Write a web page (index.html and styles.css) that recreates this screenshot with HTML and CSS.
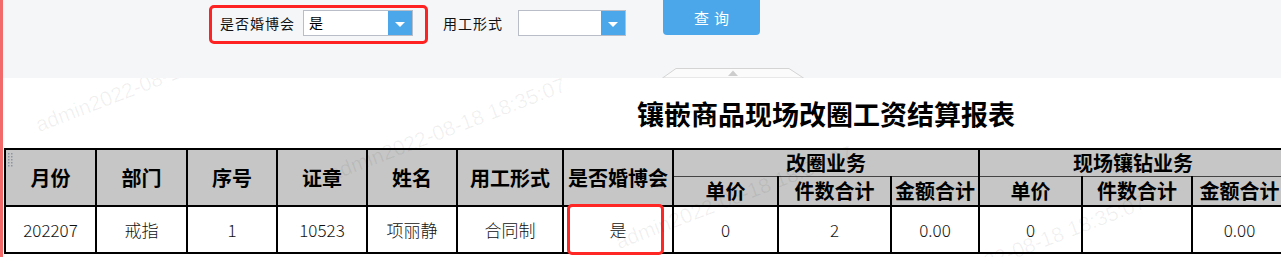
FILE: index.html
```
<!DOCTYPE html>
<html>
<head>
	<meta charset="utf-8">
	<title>镶嵌商品现场改圈工资结算报表</title>
	<link rel="stylesheet" href="styles.css">
</head>
<body>
<div class="toolbar">
	<div class="filters">
		<div class="filter filter-marked">
			<span class="filter-label">是否婚博会</span>
			<div class="combo combo-wide">
				<span class="combo-value">是</span>
				<span class="combo-arrow"></span>
			</div>
		</div>
		<div class="filter filter-plain">
			<span class="filter-label">用工形式</span>
			<div class="combo">
				<span class="combo-value"></span>
				<span class="combo-arrow"></span>
			</div>
		</div>
		<button class="query">查询</button>
	</div>
	<div class="collapse-tab">
		<svg width="142" height="10" viewBox="0 0 142 10">
			<polygon points="0.5,10 14,0.5 127,0.5 141.5,10" fill="#fbfbfc" stroke="#d4d4d4" stroke-width="1"/>
			<polygon points="66,8 71,2.5 76,8" fill="#cdcdcd"/>
		</svg>
	</div>
</div>

<div class="report">
	<h1 class="report-title">镶嵌商品现场改圈工资结算报表</h1>
	<table class="sheet">
		<colgroup>
			<col style="width:91px"><col style="width:91px"><col style="width:90px">
			<col style="width:90px"><col style="width:90px"><col style="width:106px">
			<col style="width:110px"><col style="width:105px"><col style="width:113px">
			<col style="width:88px"><col style="width:103px"><col style="width:110px">
			<col style="width:95px">
		</colgroup>
		<thead>
			<tr class="head-top">
				<th rowspan="2" class="grip-cell">
					<svg class="grip" width="5" height="14" viewBox="0 0 5 14">
						<g fill="#8c96a3">
							<rect x="0" y="0" width="1.5" height="1.5"/><rect x="3" y="0" width="1.5" height="1.5"/>
							<rect x="0" y="3" width="1.5" height="1.5"/><rect x="3" y="3" width="1.5" height="1.5"/>
							<rect x="0" y="6" width="1.5" height="1.5"/><rect x="3" y="6" width="1.5" height="1.5"/>
							<rect x="0" y="9" width="1.5" height="1.5"/><rect x="3" y="9" width="1.5" height="1.5"/>
							<rect x="0" y="12" width="1.5" height="1.5"/><rect x="3" y="12" width="1.5" height="1.5"/>
						</g>
					</svg>
					月份
				</th>
				<th rowspan="2">部门</th>
				<th rowspan="2">序号</th>
				<th rowspan="2">证章</th>
				<th rowspan="2">姓名</th>
				<th rowspan="2">用工形式</th>
				<th rowspan="2">是否婚博会</th>
				<th colspan="3" class="group">改圈业务</th>
				<th colspan="3" class="group">现场镶钻业务</th>
			</tr>
			<tr class="head-sub">
				<th>单价</th>
				<th>件数合计</th>
				<th>金额合计</th>
				<th>单价</th>
				<th>件数合计</th>
				<th>金额合计</th>
			</tr>
		</thead>
		<tbody>
			<tr class="data-row">
				<td>202207</td>
				<td>戒指</td>
				<td>1</td>
				<td>10523</td>
				<td>项丽静</td>
				<td>合同制</td>
				<td class="marked-cell"><span class="mark-box"></span>是</td>
				<td>0</td>
				<td>2</td>
				<td>0.00</td>
				<td>0</td>
				<td></td>
				<td>0.00</td>
			</tr>
		</tbody>
	</table>
</div>

<div class="watermarks">
	<span class="wm wm-1">admin2022-08-18 18:35:07</span>
	<span class="wm wm-2">admin2022-08-18 18:35:07</span>
	<span class="wm wm-3">admin2022-08-18 18:35:07</span>
	<span class="wm wm-4">admin2022-08-18 18:35:07</span>
</div>
</body>
</html>
```

FILE: styles.css
```
html{
	margin: 0;
	overflow: hidden;
}
body{
	margin: 0;
	height: 257px;
	overflow: hidden;
	position: relative;
	border-left: 3px solid #f26a6a;
	background: #fff;
	color: #000;
	font-family: "Noto Sans CJK SC", "Noto Sans", sans-serif;
}

/* top filter bar */
.toolbar{
	position: relative;
	z-index: 2;
	height: 78px;
	background: #f5f6f8;
	display: flex;
	flex-direction: column;
}
.filters{
	display: flex;
	align-items: flex-start;
	padding: 5px 0 0 206px;
}
.filter{
	display: flex;
	align-items: center;
}
.filter-marked{
	border: 3px solid #ff2222;
	border-radius: 5px;
	padding: 2px 12px 5px 8px;
}
.filter-plain{
	margin: 5px 0 0 15px;
}
.filter-label{
	font-size: 14px;
	letter-spacing: 1px;
	line-height: 20px;
	color: #111;
}
.filter-marked .filter-label{
	margin-right: 8px;
}
.filter-plain .filter-label{
	margin-right: 15px;
}
.combo{
	box-sizing: border-box;
	width: 108px;
	height: 26px;
	border: 1px solid #b8bdc8;
	background: #fff;
	display: flex;
}
.combo-wide{
	width: 110px;
}
.combo-value{
	flex: 1;
	font-size: 14px;
	line-height: 23px;
	padding-left: 5px;
}
.combo-arrow{
	width: 24px;
	background: #4ba7e9;
	display: flex;
	align-items: center;
	justify-content: center;
	padding-top: 2px;
	box-sizing: border-box;
}
.combo-arrow::after{
	content: "";
	border-left: 5px solid transparent;
	border-right: 5px solid transparent;
	border-top: 5px solid #fff;
}
.query{
	margin: -5px 0 0 37px;
	width: 97px;
	height: 35px;
	border: none;
	border-radius: 0 0 4px 4px;
	background: #4ba7e9;
	color: #fff;
	font-family: inherit;
	font-size: 15px;
	letter-spacing: 5px;
	padding: 0 0 1px 5px;
	outline: none;
}
.collapse-tab{
	margin: auto 0 0 659px;
	height: 10px;
	line-height: 0;
}

/* report */
.report-title{
	margin: 18px 0 0;
	padding-left: 634px;
	font-size: 27px;
	line-height: 36px;
	font-weight: bold;
}
.sheet{
	margin: 16px 0 0 1px;
	border-collapse: collapse;
	table-layout: fixed;
	width: 1282px;
}
.sheet th,
.sheet td{
	border: 2px solid #000;
	padding: 0;
	text-align: center;
	white-space: nowrap;
}
.sheet th{
	background: #c6c6c6;
	font-size: 20px;
	font-weight: bold;
	line-height: 24px;
}
.head-top th{
	height: 26px;
}
.head-sub th{
	height: 28px;
	border-top: 1px solid #444;
}
.sheet .group{
	border-bottom: 1px solid #444;
}
.grip-cell{
	position: relative;
}
.grip{
	position: absolute;
	left: 2px;
	top: 3px;
}
.data-row td{
	height: 45px;
	font-size: 17px;
	font-weight: 300;
	color: #111;
}
.marked-cell{
	position: relative;
}
.mark-box{
	position: absolute;
	left: 3px;
	top: -3px;
	width: 97px;
	height: 51px;
	box-sizing: border-box;
	border: 3px solid #ff2626;
	border-radius: 5px;
}

/* watermark overlay */
.watermarks{
	position: absolute;
	left: 0;
	top: 0;
	width: 100%;
	height: 100%;
	z-index: 1;
	pointer-events: none;
}
.wm{
	position: absolute;
	font-family: "Liberation Sans", sans-serif;
	font-size: 21px;
	line-height: 21px;
	color: rgba(0, 0, 0, 0.06);
	white-space: nowrap;
	transform: rotate(-21deg);
	transform-origin: 0 100%;
}
.wm-1{ left: 37px; top: 114px; }
.wm-2{ left: 330px; top: 163px; }
.wm-3{ left: 617px; top: 231px; }
.wm-4{ left: 910px; top: 280px; }
```
